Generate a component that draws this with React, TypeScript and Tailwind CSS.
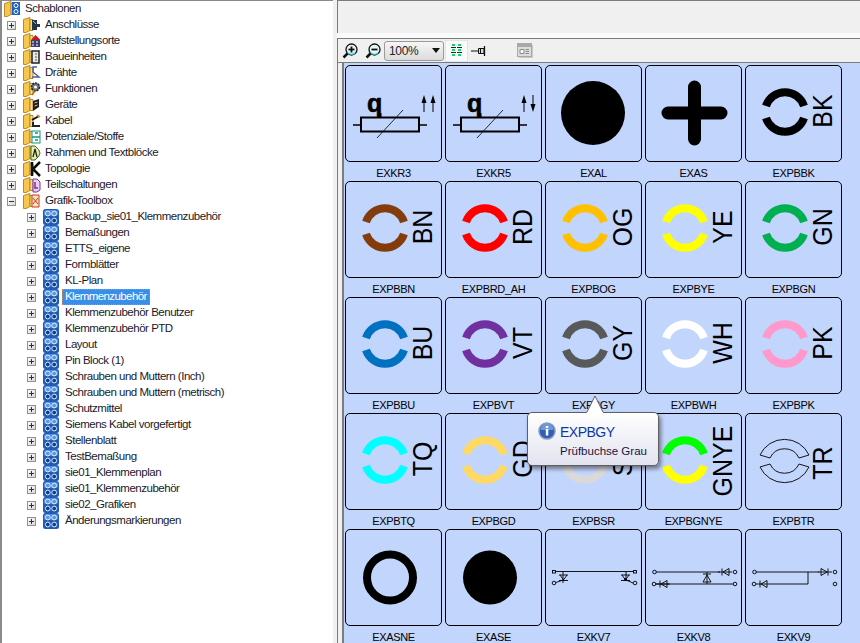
import type { ReactNode } from "react"

const font = "font-['Liberation_Sans',Arial,sans-serif]"

function PlusBox({ open = false }: { open?: boolean }) {
  return (
    <span className="flex h-[9px] w-[9px] shrink-0 items-center justify-center border border-[#8e8f8f] bg-gradient-to-br from-white to-[#d8d8d4]">
      <svg width="7" height="7" viewBox="0 0 7 7">
        <path d="M1 3.500H6" stroke="#20305a" strokeWidth="1" />
        {!open && <path d="M3.500 1V6" stroke="#20305a" strokeWidth="1" />}
      </svg>
    </span>
  )
}

const overlays: Record<string, ReactNode> = {
  root: (
    <g>
      <rect x="8" y="1" width="8" height="13" fill="#1c62c4" />
      <circle cx="12" cy="4.500" r="2" fill="none" stroke="#fff" />
      <circle cx="12" cy="10.500" r="2" fill="none" stroke="#fff" />
    </g>
  ),
  plug: (
    <g>
      <path d="M9 3h5v4h3v3h-3v3H9z" fill="#26344c" />
      <path d="M10 4l3 3" stroke="#8fb7e0" />
    </g>
  ),
  house: (
    <g>
      <path d="M8 7l4.500-5 5 5z" fill="#c81818" />
      <rect x="8" y="7" width="9" height="7" fill="#3a3f78" />
      <path d="M9 9h2M13 9h2M9 12h2M13 12h2" stroke="#fff" />
    </g>
  ),
  box: (
    <g>
      <rect x="9" y="2" width="7" height="12" fill="#e8e8e8" stroke="#222" strokeWidth="1.500" />
      <path d="M12 5h2M12 8h2M12 11h2" stroke="#555" />
    </g>
  ),
  wire: <path d="M14 2h-4v5l6 5h-7" fill="none" stroke="#4d5fa0" strokeWidth="1.500" />,
  gear: (
    <g>
      <circle cx="12.500" cy="6" r="4" fill="#6d7580" stroke="#222" strokeWidth="1.500" strokeDasharray="2 1" />
      <circle cx="12.500" cy="6" r="1.500" fill="#fff" />
      <path d="M9 14l3-4" stroke="#c46a20" strokeWidth="1.500" />
    </g>
  ),
  device: (
    <g>
      <path d="M10 4l6-2v8l-6 4z" fill="#1c1c1c" />
      <path d="M11.500 6l3-1M11.500 9l3-1" stroke="#c8c8c8" />
    </g>
  ),
  cable: (
    <g>
      <path d="M9 7l7-4" stroke="#111" strokeWidth="2" />
      <path d="M14 2l3 2" stroke="#e88a18" strokeWidth="2" />
      <path d="M10 9v4h7" fill="none" stroke="#222" strokeWidth="2" />
    </g>
  ),
  pot: (
    <g>
      <rect x="9" y="2" width="8" height="12" fill="#fff" stroke="#109880" />
      <path d="M9 8h8M12 4h3M12 11h3" stroke="#109880" strokeWidth="1.500" />
    </g>
  ),
  frame: (
    <g>
      <path d="M8 1h4q5 4 5 7t-5 7H8z" fill="#e8eca8" stroke="#2f6a2a" />
      <path d="M10 12l2-8 2 8" fill="none" stroke="#222" strokeWidth="1.300" />
    </g>
  ),
  topo: <path d="M9 1v14M17 1l-7 7 7 7" fill="none" stroke="#0d0d0d" strokeWidth="2.500" />,
  sub: (
    <g>
      <path d="M10 2h4l3 3v8l-3 2h-4z" fill="#e6d0f0" stroke="#7c2ea8" />
      <path d="M12 5v6h3" fill="none" stroke="#7c2ea8" strokeWidth="1.500" />
    </g>
  ),
  gfx: (
    <g>
      <path d="M9 2h7v12H9z" fill="#f6e2c4" stroke="#c83a18" />
      <path d="M10 5l5 6M15 5l-5 6" stroke="#c83a18" />
    </g>
  ),
}

function Folder({ kind }: { kind: string }) {
  return (
    <svg width="18" height="16" viewBox="0 0 18 16" className="shrink-0">
      <path d="M0.500 2.500L7 0.500V13.500L3 15.500H0.500Z" fill="#f7c64d" stroke="#b88a2a" />
      <path d="M7 2.500H10V13.500H7Z" fill="#fbdc84" stroke="#b88a2a" />
      {overlays[kind]}
    </svg>
  )
}

function BlueIcon() {
  return (
    <svg width="16" height="16" viewBox="0 0 16 16" className="shrink-0">
      <rect x="0" y="0" width="16" height="16" rx="2.500" fill="#1d5cb8" />
      <rect x="1" y="1" width="14" height="6" rx="2" fill="#4a8ee0" />
      <circle cx="4.800" cy="4.500" r="2.400" fill="#5f97dc" stroke="#dfeaf6" />
      <circle cx="11.200" cy="4.500" r="2.400" fill="#5f97dc" stroke="#dfeaf6" />
      <circle cx="4.800" cy="11.500" r="2.400" fill="#0f3f88" stroke="#dfeaf6" />
      <circle cx="11.200" cy="11.500" r="2.400" fill="#0f3f88" stroke="#dfeaf6" />
    </svg>
  )
}

const groups = [
  ["Anschlüsse", "plug"],
  ["Aufstellungsorte", "house"],
  ["Baueinheiten", "box"],
  ["Drähte", "wire"],
  ["Funktionen", "gear"],
  ["Geräte", "device"],
  ["Kabel", "cable"],
  ["Potenziale/Stoffe", "pot"],
  ["Rahmen und Textblöcke", "frame"],
  ["Topologie", "topo"],
  ["Teilschaltungen", "sub"],
]

const toolbox = [
  "Backup_sie01_Klemmenzubehör",
  "Bemaßungen",
  "ETTS_eigene",
  "Formblätter",
  "KL-Plan",
  "Klemmenzubehör",
  "Klemmenzubehör Benutzer",
  "Klemmenzubehör PTD",
  "Layout",
  "Pin Block (1)",
  "Schrauben und Muttern (Inch)",
  "Schrauben und Muttern (metrisch)",
  "Schutzmittel",
  "Siemens Kabel vorgefertigt",
  "Stellenblatt",
  "TestBemaßung",
  "sie01_Klemmenplan",
  "sie01_Klemmenzubehör",
  "sie02_Grafiken",
  "Änderungsmarkierungen",
]

function Tree() {
  return (
    <div className="h-full w-[333px] shrink-0 overflow-hidden border-t border-l-2 border-t-[#8a8a8a] border-l-[#8a8a8a] bg-white text-[11.500px] leading-none tracking-[-0.48px] text-[#1a1a2a]">
      <div className="flex h-4 items-center pl-[2px]">
        <Folder kind="root" />
        <span className="ml-[3px]">Schablonen</span>
      </div>
      {groups.map(([name, kind]) => (
        <div key={name} className="flex h-4 items-center pl-[5px]">
          <PlusBox />
          <span className="ml-[7px]"><Folder kind={kind} /></span>
          <span className="ml-[4px]">{name}</span>
        </div>
      ))}
      <div className="flex h-4 items-center pl-[5px]">
        <PlusBox open />
        <span className="ml-[7px]"><Folder kind="gfx" /></span>
        <span className="ml-[4px]">Grafik-Toolbox</span>
      </div>
      {toolbox.map((name) => (
        <div key={name} className="flex h-4 items-center pl-[25px]">
          <PlusBox />
          <span className="ml-[7px]"><BlueIcon /></span>
          {name === "Klemmenzubehör" ? (
            <span className="ml-[3px] flex h-[16px] items-center border border-dotted border-[#f08020] bg-[#3a8ee8] px-[2px] tracking-[-0.6px] text-white">
              {name}
            </span>
          ) : (
            <span className="ml-[6px]">{name}</span>
          )}
        </div>
      ))}
    </div>
  )
}

function Magnifier({ minus = false }: { minus?: boolean }) {
  return (
    <svg width="16" height="16" viewBox="0 0 16 16">
      <path d="M5.500 10.500L1.500 14.500" stroke="#111" strokeWidth="2.500" />
      <circle cx="9.500" cy="6.500" r="5.500" fill="#e4f6f6" stroke="#111" strokeWidth="1.300" />
      <path d="M6.500 6.500H12.500" stroke="#111" strokeWidth="1.800" />
      {!minus && <path d="M9.500 3.500V9.500" stroke="#111" strokeWidth="1.800" />}
      <path d="M5.500 9.500A5 5 0 0 0 13 10" fill="none" stroke="#20c8d8" strokeWidth="1.200" />
    </svg>
  )
}

function Toolbar() {
  return (
    <div className="flex h-6 items-center border-b border-[#7c7c7c] pl-[4px]">
      <Magnifier />
      <span className="ml-[7px]"><Magnifier minus /></span>
      <div className="ml-[3px] flex h-[20px] w-[60px] items-center justify-between rounded-[3px] border border-[#9a9a9a] bg-gradient-to-b from-[#f6f6f6] to-[#dcdcdc] pl-[4px] pr-[3px] text-[12px] tracking-[-0.3px] text-[#222]">
        100%
        <svg width="8" height="5" viewBox="0 0 8 5"><path d="M0 0H8L4 5Z" fill="#111" /></svg>
      </div>
      <div className="ml-[1px] flex h-[22px] w-[23px] items-center justify-center border border-[#e4e4e4] bg-[#fafafa]">
        <svg width="12" height="13" viewBox="0 0 12 13" shapeRendering="crispEdges">
          <path d="M1 0h3v2H1zM7 0h3v2H7zM1 5h3v2H1zM7 5h3v2H7zM1 10h3v2H1zM7 10h3v2H7z" fill="#10d868" />
          <path d="M0 3h5v1H0zM6 3h5v1H6zM0 8h5v1H0zM6 8h5v1H6z" fill="#222" />
        </svg>
      </div>
      <svg width="15" height="12" viewBox="0 0 15 12" className="ml-[3px]">
        <path d="M0 6H7" stroke="#111" />
        <path d="M7.500 3.500H13V8.500H7.500Z" fill="#d8d8d8" stroke="#111" />
        <path d="M9.500 3.500V8.500" stroke="#111" />
        <path d="M13.500 1V11" stroke="#111" strokeWidth="1.300" />
      </svg>
      <svg width="16" height="15" viewBox="0 0 16 15" className="ml-[31px]">
        <rect x="0.500" y="0.500" width="14" height="13" fill="#dcdcdc" stroke="#a8a8a8" />
        <rect x="1" y="1" width="13" height="3" fill="#a8a8a8" />
        <path d="M3 6.500H7V10.500H3ZM8.500 6.500H12M8.500 8.500H12M8.500 10.500H12" fill="#f4f4f4" stroke="#8c8c8c" />
        <path d="M15.500 2V14.500H2" fill="none" stroke="#c8c8c8" />
      </svg>
    </div>
  )
}

function Ring({ top, bottom }: { top: string; bottom?: string }) {
  return (
    <g fill="none" strokeWidth="8">
      <path d="M21 41A20 20 0 0 1 59 41" stroke={top} />
      <path d="M21 53A20 20 0 0 0 59 53" stroke={bottom ?? top} />
    </g>
  )
}

function Code({ text, y = 46 }: { text: string; y?: number }) {
  return (
    <text
      transform={`translate(86.500 ${y}) rotate(-90) scale(1 1.120)`}
      textAnchor="middle"
      fontSize="25"
      fontFamily="Liberation Sans, Arial, sans-serif"
      fill="#000"
    >
      {text}
    </text>
  )
}

function Resistor({ down = false }: { down?: boolean }) {
  return (
    <g>
      <text x="22" y="47" fontSize="25" fontWeight="bold" stroke="#000" strokeWidth="0.600" fontFamily="Liberation Sans, Arial, sans-serif">q</text>
      <path d="M35 48V52" stroke="#000" strokeWidth="3" />
      <rect x="16" y="52.500" width="58" height="14" fill="none" stroke="#000" strokeWidth="2" />
      <path d="M8 60H16M74 60H82" stroke="#000" strokeWidth="1.500" />
      <path d="M32 73L58 45" stroke="#000" strokeWidth="0.800" />
      <path d="M79 47V36" stroke="#000" />
      <path d="M76.500 38L79 30L81.500 38Z" fill="#000" />
      {down ? (
        <g>
          <path d="M88 30V42" stroke="#000" />
          <path d="M85.500 39L88 47L90.500 39Z" fill="#000" />
        </g>
      ) : (
        <g>
          <path d="M88 47V36" stroke="#000" />
          <path d="M85.500 38L88 30L90.500 38Z" fill="#000" />
        </g>
      )}
    </g>
  )
}

function Term({ x, y }: { x: number; y: number }) {
  return <circle cx={x} cy={y} r="1.800" fill="none" stroke="#000" strokeWidth="0.900" />
}

function DiodeH({ x, y, dir }: { x: number; y: number; dir: 1 | -1 }) {
  return (
    <path
      d={`M${x - 4 * dir} ${y - 3.500}V${y + 3.500}L${x + 2 * dir} ${y}ZM${x + 3 * dir} ${y - 3.500}V${y + 3.500}M${x - 7 * dir} ${y}H${x + 7 * dir}`}
      fill="none"
      stroke="#000"
      strokeWidth="0.900"
    />
  )
}

function Kv7() {
  return (
    <g fill="none" stroke="#000" strokeWidth="0.900">
      <path d="M11 42.500H88" />
      <rect x="7.500" y="41.500" width="3" height="2.500" />
      <rect x="88.500" y="41.500" width="3" height="2.500" />
      <Term x={9} y={54} />
      <Term x={90} y={54} />
      <path d="M18 42.500V51M11 53.500L18 51M14 46H23M15 46L18.500 51L22 46M14 51.500H23M18 51V54" />
      <path d="M81 42.500V51L88 54M76 46H85M77 46L80.500 51L84 46M76 51.500H85" />
      <circle cx="80.500" cy="50.500" r="1" fill="#000" />
    </g>
  )
}

function Kv8() {
  return (
    <g fill="none" stroke="#000" strokeWidth="0.900">
      <Term x={9.500} y={43} />
      <Term x={90} y={43} />
      <Term x={9} y={55} />
      <Term x={90} y={55} />
      <path d="M11 43H75M11 55H88" />
      <DiodeH x={80} y={43} dir={-1} />
      <DiodeH x={18} y={55} dir={-1} />
      <path d="M62 43V55M58 45H66M58 53H66L62 46Z" />
    </g>
  )
}

function Kv9() {
  return (
    <g fill="none" stroke="#000" strokeWidth="0.900">
      <Term x={9.500} y={43} />
      <Term x={90} y={43} />
      <Term x={9} y={55} />
      <Term x={90} y={55} />
      <path d="M11 43H74M25 55H63V43" />
      <DiodeH x={80} y={43} dir={1} />
      <DiodeH x={18} y={55} dir={-1} />
    </g>
  )
}

type Item = { label: string; art: ReactNode }

const ring = (label: string, code: string, top: string, bottom?: string, y?: number): Item => ({
  label,
  art: (
    <g>
      <Ring top={top} bottom={bottom} />
      <Code text={code} y={y} />
    </g>
  ),
})

const items: Item[] = [
  { label: "EXKR3", art: <Resistor /> },
  { label: "EXKR5", art: <Resistor down /> },
  { label: "EXAL", art: <circle cx="48" cy="48" r="32" fill="#000" /> },
  {
    label: "EXAS",
    art: <path d="M49.500 22V74M23 48H76" stroke="#000" strokeWidth="13" strokeLinecap="round" fill="none" />,
  },
  ring("EXPBBK", "BK", "#000000"),
  ring("EXPBBN", "BN", "#843c0c"),
  ring("EXPBRD_AH", "RD", "#ff0000"),
  ring("EXPBOG", "OG", "#ffc000"),
  ring("EXPBYE", "YE", "#ffff00"),
  ring("EXPBGN", "GN", "#00b050"),
  ring("EXPBBU", "BU", "#0070c0"),
  ring("EXPBVT", "VT", "#7030a0"),
  ring("EXPBGY", "GY", "#595959"),
  ring("EXPBWH", "WH", "#ffffff"),
  ring("EXPBPK", "PK", "#ff99cc"),
  ring("EXPBTQ", "TQ", "#00ffff"),
  ring("EXPBGD", "GD", "#ffd966"),
  ring("EXPBSR", "SR", "#d9d9d9"),
  ring("EXPBGNYE", "GNYE", "#00ff00", "#ffff00", 48),
  {
    label: "EXPBTR",
    art: (
      <g>
        <g fill="none" stroke="#000" strokeWidth="0.900">
          <path d="M15 42A27 27 0 0 1 64 42L54 45A16 16 0 0 0 25 45Z" />
          <path d="M15 54A27 27 0 0 0 64 54L54 51A16 16 0 0 1 25 51Z" />
        </g>
        <Code text="TR" y={50} />
      </g>
    ),
  },
  {
    label: "EXASNE",
    art: <circle cx="45" cy="48.500" r="23" fill="none" stroke="#000" strokeWidth="8" />,
  },
  { label: "EXASE", art: <circle cx="45" cy="48.500" r="27" fill="#000" /> },
  { label: "EXKV7", art: <Kv7 /> },
  { label: "EXKV8", art: <Kv8 /> },
  { label: "EXKV9", art: <Kv9 /> },
]

function Card({ item }: { item: Item }) {
  return (
    <div className="w-[100px]">
      <div className="h-[97px] w-[97px] rounded-[5px] border border-black">
        <svg width="95" height="95" viewBox="1 1 95 95" className="overflow-hidden">
          {item.art}
        </svg>
      </div>
      <div className="h-[19px] w-[97px] text-center text-[11px] leading-[23px] tracking-[-0.35px] text-black">
        {item.label}
      </div>
    </div>
  )
}

function Tooltip() {
  return (
    <div className="absolute left-[527px] top-[412px] h-[54px] w-[132px] rounded-[5px] border border-[#5f5f62] bg-gradient-to-b from-white to-[#e2e3ef] shadow-[2px_3px_4px_rgba(0,0,0,0.45)]">
      <svg width="18" height="18" viewBox="0 0 18 18" className="absolute -top-[18px] left-[58px]">
        <path d="M0.500 18L9 1L17.500 18" fill="#fff" stroke="#5f5f62" />
        <rect x="1" y="17" width="16" height="1" fill="#fff" />
      </svg>
      <div className="flex pl-[10px] pt-[10px]">
        <svg width="18" height="18" viewBox="0 0 18 18" className="mt-[-1px] shrink-0">
          <circle cx="9" cy="9" r="8" fill="#2f5fb8" stroke="#8a9ab8" strokeWidth="1.500" />
          <path d="M2.500 8A6.500 6.500 0 0 1 15.500 8Z" fill="#6f97dc" />
          <rect x="7.800" y="7" width="2.500" height="6.500" fill="#fff" />
          <rect x="7.800" y="4" width="2.500" height="2" fill="#fff" />
        </svg>
        <div className="ml-[4px]">
          <div className="text-[14px] leading-[18px] tracking-[-0.5px] text-[#0a3aa8]">EXPBGY</div>
          <div className="mt-[3px] whitespace-nowrap text-[11.500px] font-medium leading-[14px] text-[#16163c]">Prüfbuchse Grau</div>
        </div>
      </div>
    </div>
  )
}

export default function App() {
  return (
    <div className={`relative flex h-[643px] w-[860px] overflow-hidden bg-[#f0f0f0] ${font}`}>
      <Tree />
      <div className="ml-[4px] flex min-w-0 flex-1 flex-col">
        <div className="h-[33px] border-t border-l border-[#7c7c7c]" />
        <div className="h-[5px] bg-[#fbfbfb]" />
        <div className="flex min-h-0 flex-1 flex-col border-t border-l border-[#7c7c7c]">
          <Toolbar />
          <div className="ml-[4px] min-h-0 flex-1 border-l-2 border-[#7c7c7c] bg-[#c2d5fc] pl-px pt-[2px]">
            <div className="grid grid-cols-[repeat(5,100px)]">
              {items.map((item) => (
                <Card key={item.label} item={item} />
              ))}
            </div>
          </div>
        </div>
      </div>
      <Tooltip />
    </div>
  )
}
